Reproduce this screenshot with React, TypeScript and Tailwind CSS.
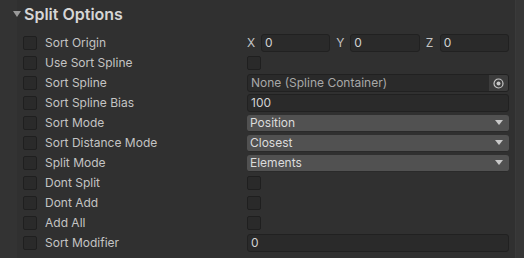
import React from 'react';

const font = { fontFamily: 'Inter, "Noto Sans", sans-serif' };

const Check = () => (
  <div className="w-[14px] h-[14px] rounded-[2px] bg-[#2a2a2a] border border-[#1f1f1f] shrink-0" />
);

const Field = ({ value, className = '' }: { value: string; className?: string }) => (
  <div className={`h-[18px] rounded-[3px] bg-[#2a2a2a] border border-[#212121] flex items-center px-[3px] text-[12px] text-[#d2d2d2] ${className}`}>
    {value}
  </div>
);

const Dropdown = ({ value }: { value: string }) => (
  <div className="h-[17px] w-full rounded-[3px] bg-[#515151] border-b border-[#2a2a2a] flex items-center justify-between pl-[3px] pr-[6px] text-[12px] text-[#dcdcdc]">
    <span>{value}</span>
    <svg width="8" height="5" viewBox="0 0 8 5">
      <path d="M0 0 H8 L4 5 Z" fill="#c8c8c8" />
    </svg>
  </div>
);

const Vec = ({ axis }: { axis: string }) => (
  <div className="flex-1 flex items-center">
    <span className="w-[14px] text-[12px] text-[#c4c4c4]">{axis}</span>
    <Field value="0" className="flex-1" />
  </div>
);

const Row = ({ label, children }: { label: string; children: React.ReactNode }) => (
  <div className="h-[20px] flex items-center">
    <div className="ml-[6px]">
      <Check />
    </div>
    <span className="ml-[8px] w-[202px] text-[12px] text-[#c4c4c4]">{label}</span>
    <div className="w-[262px] flex items-center">{children}</div>
  </div>
);

export default function App() {
  return (
    <div className="w-[524px] h-[258px] bg-[#303030] flex overflow-hidden" style={font}>
      <div className="w-[17px] bg-[#333333]" />
      <div className="flex-1 flex flex-col">
        <div className="h-[28px] flex items-center -ml-[4px]">
          <svg width="8" height="6" viewBox="0 0 8 6" className="mr-[3px]">
            <path d="M0 0 H8 L4 6 Z" fill="#9a9a9a" />
          </svg>
          <span className="text-[16px] font-semibold text-[#d6d6d6]">Split Options</span>
        </div>
        <div className="flex flex-col pt-[5px]">
          <Row label="Sort Origin">
            <div className="flex w-full gap-[6px]">
              <Vec axis="X" />
              <Vec axis="Y" />
              <Vec axis="Z" />
            </div>
          </Row>
          <Row label="Use Sort Spline">
            <Check />
          </Row>
          <Row label="Sort Spline">
            <div className="h-[18px] w-full rounded-[3px] bg-[#2a2a2a] border border-[#212121] flex items-center overflow-hidden">
              <span className="flex-1 pl-[3px] text-[12px] text-[#a8a8a8]">None (Spline Container)</span>
              <div className="w-[19px] h-full bg-[#3c3c3c] flex items-center justify-center">
                <svg width="11" height="11" viewBox="0 0 11 11">
                  <circle cx="5.5" cy="5.5" r="4.5" fill="none" stroke="#c8c8c8" strokeWidth="1.2" />
                  <circle cx="5.5" cy="5.5" r="2" fill="#c8c8c8" />
                </svg>
              </div>
            </div>
          </Row>
          <Row label="Sort Spline Bias">
            <Field value="100" className="w-full" />
          </Row>
          <Row label="Sort Mode">
            <Dropdown value="Position" />
          </Row>
          <Row label="Sort Distance Mode">
            <Dropdown value="Closest" />
          </Row>
          <Row label="Split Mode">
            <Dropdown value="Elements" />
          </Row>
          <Row label="Dont Split">
            <Check />
          </Row>
          <Row label="Dont Add">
            <Check />
          </Row>
          <Row label="Add All">
            <Check />
          </Row>
          <Row label="Sort Modifier">
            <Field value="0" className="w-full" />
          </Row>
        </div>
      </div>
      <div className="w-[9px] bg-[#363636] border-l border-[#3a3a3a]" />
    </div>
  );
}
